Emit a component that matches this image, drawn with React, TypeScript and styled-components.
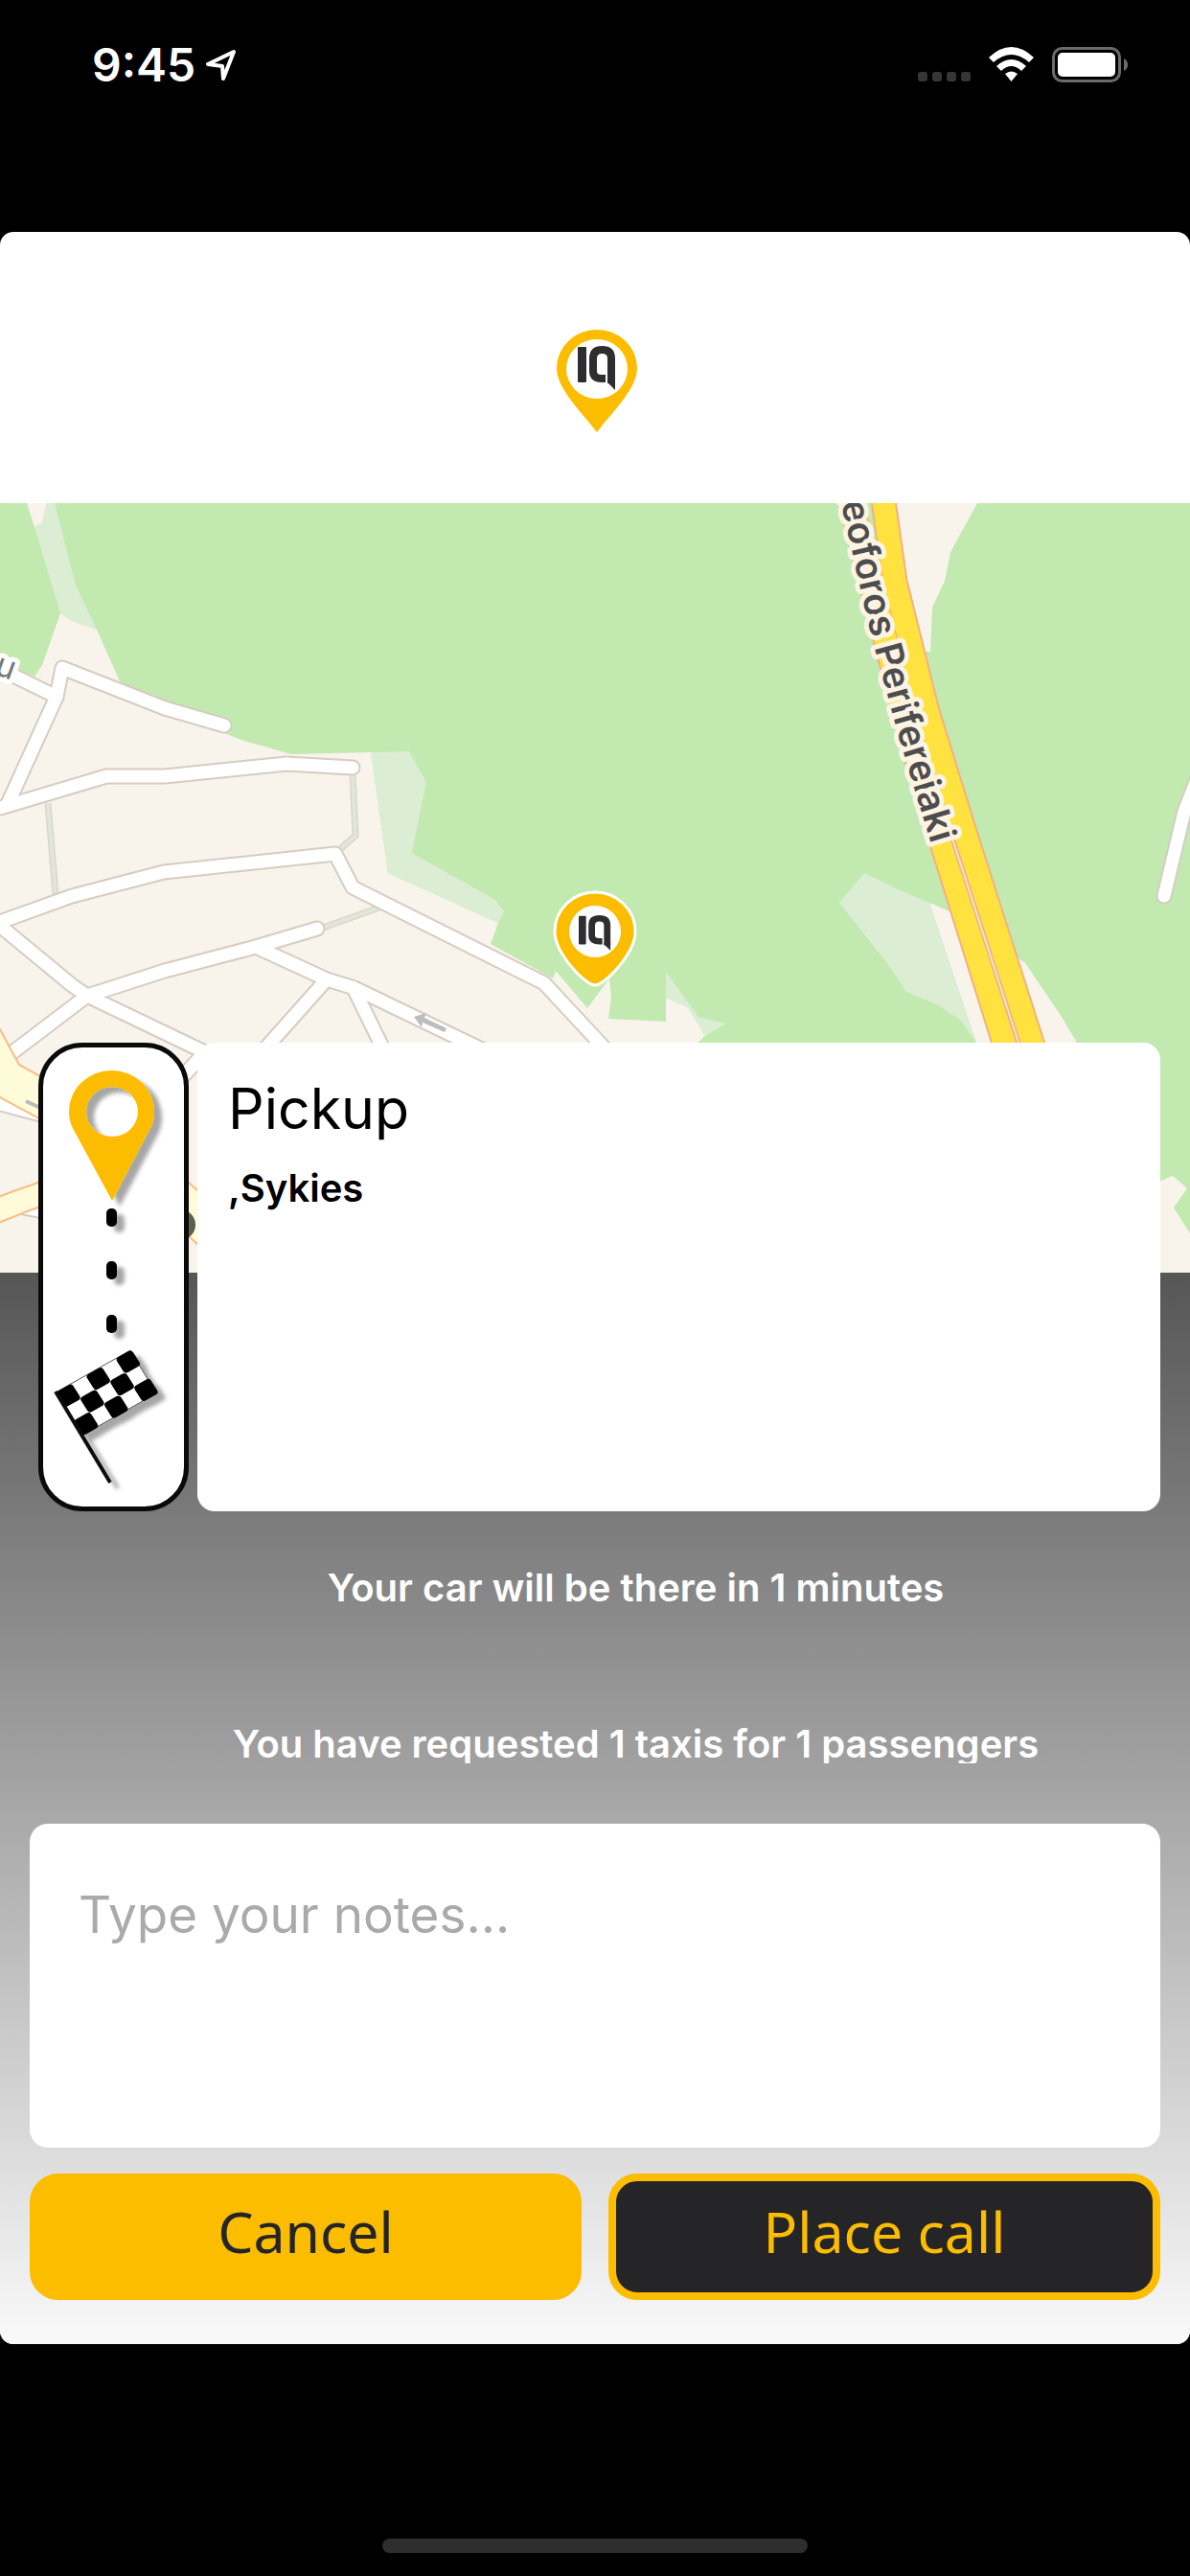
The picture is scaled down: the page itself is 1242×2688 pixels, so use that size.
import React, { useState } from "react";
import styled, { createGlobalStyle } from "styled-components";

const YELLOW = "#fcbd00";
const INK = "#252527";

const GlobalStyle = createGlobalStyle`
  * { box-sizing: border-box; }
  body {
    margin: 0;
    background: #000;
    font-family: Inter, "Liberation Sans", sans-serif;
  }
`;

const Screen = styled.div`
  min-height: 100vh;
  display: flex;
  flex-direction: column;
  background: #000;
`;

const StatusBar = styled.header`
  height: 242px;
  padding: 40px 64px 0 96px;
  display: flex;
  justify-content: space-between;
  align-items: flex-start;
  color: #fff;
`;

const StatusGroup = styled.div<{ $gap: number }>`
  height: 56px;
  display: flex;
  align-items: center;
  gap: ${(p) => p.$gap}px;
`;

const Clock = styled.time`
  font-size: 48px;
  line-height: 56px;
  font-weight: 600;
`;

const Sheet = styled.main`
  border-radius: 14px;
  overflow: hidden;
  background: #fff;
`;

const Brand = styled.div`
  height: 283px;
  padding: 102px 0 0 4px;
  display: flex;
  justify-content: center;
  align-items: flex-start;
`;

const MapArea = styled.section`
  height: 803px;
  background: #c2e9b0;

  svg {
    display: block;
    width: 100%;
    height: 100%;
  }
`;

const RoadName = styled.text`
  font-family: Inter, "Liberation Sans", sans-serif;
  font-size: 39px;
  font-weight: 600;
  fill: #4d4d4d;
  stroke: #fdf3e3;
  stroke-width: 10px;
  stroke-linejoin: round;
  paint-order: stroke;
`;

const StreetName = styled(RoadName)`
  font-size: 34px;
  font-weight: 400;
  fill: #777;
  stroke: #fff;
`;

const Panel = styled.section`
  display: flex;
  flex-direction: column;
  padding: 0 31px 46px;
  background: linear-gradient(#565656, #f9f9f9);
`;

const Trip = styled.div`
  margin-top: -240px;
  height: 489px;
  padding-left: 9px;
  display: flex;
  gap: 9px;
  z-index: 1;
`;

const Journey = styled.div`
  width: 157px;
  flex: none;
  border: 5px solid #0a0a0a;
  border-radius: 46px;
  background: #fff;

  svg {
    display: block;
    width: 100%;
    height: 100%;
  }
`;

const TripCard = styled.article`
  flex: 1;
  padding: 32px;
  border-radius: 18px;
  background: #fff;
  color: #000;
`;

const TripTitle = styled.h1`
  margin: 0;
  font-size: 59px;
  line-height: 74px;
  font-weight: 400;
`;

const TripPlace = styled.p`
  margin: 18px 0 0;
  font-size: 40px;
  line-height: 56px;
  font-weight: 600;
`;

const Notices = styled.div`
  padding: 56px 0 63px 54px;
  display: flex;
  flex-direction: column;
  gap: 119px;
`;

const Notice = styled.p`
  margin: 0 -31px 0 0;
  height: 44px;
  overflow: hidden;
  color: #fff;
  font-size: 40px;
  line-height: 48px;
  font-weight: 600;
  text-align: center;
`;

const Notes = styled.textarea`
  display: block;
  width: 100%;
  height: 338px;
  padding: 61px 51px;
  border: 0;
  border-radius: 19px;
  resize: none;
  background: #fff;
  color: #000;
  font-family: inherit;
  font-size: 53px;
  line-height: 68px;

  &::placeholder {
    color: #aaa;
    opacity: 1;
  }
`;

const Actions = styled.div`
  margin-top: 27px;
  display: flex;
  gap: 28px;
`;

const ActionButton = styled.button<{ $dark?: boolean }>`
  flex: 1;
  height: 132px;
  padding: 0 0 12px;
  border: 8px solid ${YELLOW};
  border-radius: 30px;
  background: ${(p) => (p.$dark ? INK : YELLOW)};
  color: ${(p) => (p.$dark ? YELLOW : INK)};
  font-family: "Noto Sans", "Open Sans", sans-serif;
  font-size: 59px;
  line-height: 72px;
`;

const HomeBar = styled.div`
  width: 444px;
  height: 15px;
  margin: auto auto 24px;
  border-radius: 8px;
  background: #2e2e2e;
`;

/* The IQ mark, drawn on a 39 x 46 grid. */
function Mark() {
  return (
    <g fill="none" stroke="#2e2e30" strokeWidth="8">
      <rect x="0" y="1" width="9" height="37" rx="1" fill="#2e2e30" stroke="none" />
      <path d="M29 34 H25 Q16 34 16 26 V13 Q16 4 25.500 4 Q35 4 35 13 V39" />
      <path d="M31 36 V38 L39 46 V36 Z" fill="#2e2e30" stroke="none" />
    </g>
  );
}

function BrandPin() {
  return (
    <svg width="84" height="107" viewBox="0 0 84 107" role="img" aria-label="IQ">
      <path
        d="M42 107 C27 87 0 62 0 40 A42 40 0 0 1 84 40 C84 62 57 87 42 107 Z"
        fill={YELLOW}
      />
      <ellipse cx="42" cy="41" rx="32" ry="31" fill="#fff" />
      <g transform="translate(22 17)">
        <Mark />
      </g>
    </svg>
  );
}

const STREETS = [
  "M234 232 L172 214 L65 172 L59 202 L8 314",
  "M-10 168 L16 181 L59 202",
  "M-10 321 L0 318 L111 285 L172 285 L299 272 L368 276",
  "M-20 444 L0 437 L75 410 L171 385 L350 366 L368 401 L568 501 L660 600",
  "M-10 432 L0 441 L75 503 L91 514 L214 573 L180 610",
  "M331 444 L267 463 L172 488 L91 514 L8 577",
  "M267 463 L341 497 L370 506 L540 588",
  "M341 497 L260 588",
  "M370 508 L410 590",
  "M1252 281 L1236 322 L1215 410",
];

const FOOTPATHS = [
  "M50 313 L58 408",
  "M368 283 L371 347 L356 360",
  "M337 443 L396 422",
];

const HIGHWAY = [
  "M886 -10 L912 95 L925 146 L952 250 L983 355 L1048 563 L1060 601",
  "M921 -10 L934 82 L968 218 L1008 347 L1077 563 L1089 601",
];

const MEDIAN = "M994 350 L1063 563 L1075 601";

function CityMap() {
  return (
    <svg
      viewBox="0 0 1242 803"
      preserveAspectRatio="xMidYMid slice"
      role="img"
      aria-label="Map of the pickup area"
    >
      <rect width="1242" height="803" fill="#c2e9b0" />
      <g fill="#f8f4ec">
        <path d="M0 165 L36 181 L44 169 L63 115 L75 123 L101 132 L125 186 L234 240 L255 248 L304 262 L387 260 L405 386 L520 438 L512 460 L577 496 L580 488 L613 527 L636 496 L638 515 L635 538 L695 541 L695 516 L718 526 L736 556 L700 590 V803 H0 Z" />
        <path d="M28 0 H50 L44 21 L36 25 Z" />
        <path d="M935 0 H1020 L992 51 L986 81 L973 109 L971 155 H965 L940 80 Z" />
        <path d="M970 417 L1000 430 L1050 590 H1026 L1019 563 Z" />
        <path d="M1060 473 L1070 480 L1106 533 L1124 563 L1138 590 H1080 Z" />
        <path d="M1205 710 L1224 702 L1239 715 L1225 735 L1242 762 V803 H1205 Z" />
      </g>
      <g fill="#dbedd3">
        <path d="M36 25 L44 21 L48 0 H57 L79 85 L101 132 L75 123 L63 115 Z" />
        <path d="M387 260 L427 259 L445 291 L430 365 L517 414 L526 426 L520 438 L405 386 Z" />
        <path d="M695 489 L729 536 L758 543 L736 556 L718 526 L695 516 Z" />
        <path d="M902 386 L876 417 L898 445 L926 480 L946 510 L979 524 L1002 539 L1019 563 L970 417 L942 405 Z" />
      </g>

      <g fill="none" stroke="#d9d8c6" strokeWidth="7">
        {FOOTPATHS.map((d) => (
          <path key={d} d={d} />
        ))}
      </g>
      <g fill="none" stroke="#e4e5da" strokeWidth="4">
        {FOOTPATHS.map((d) => (
          <path key={d} d={d} />
        ))}
      </g>
      <g fill="none" stroke="#d6ccc2" strokeWidth="17" strokeLinecap="round" strokeLinejoin="round">
        {STREETS.map((d) => (
          <path key={d} d={d} />
        ))}
        <path d="M-10 624 L50 640" />
        <path d="M20 734 L60 742" />
      </g>
      <g fill="none" stroke="#fff" strokeWidth="13" strokeLinecap="round" strokeLinejoin="round">
        {STREETS.map((d) => (
          <path key={d} d={d} />
        ))}
        <path d="M-10 624 L50 640" />
        <path d="M20 734 L60 742" />
      </g>

      <g fill="#fdfbd8" stroke="#f9bd84" strokeWidth="2">
        <path d="M-4 542 L20 586 L60 608 V660 L39 641 L-4 618 Z" />
        <path d="M-4 725 L14 718 L60 702 V728 L31 738 L-4 752 Z" />
        <path d="M180 694 L225 734 V790 L180 750 Z" />
      </g>
      <circle cx="188" cy="753" r="16" fill="#5d5f50" />
      <path d="M27 624 L42 631" stroke="#bbb" strokeWidth="4" />
      <path d="M432 536 L445 532 L443 537 L466 548 L464 552 L441 542 L440 547 Z" fill="#bdbdbd" />

      <g fill="none" stroke="#f3b184" strokeWidth="27" strokeLinejoin="round">
        {HIGHWAY.map((d) => (
          <path key={d} d={d} />
        ))}
      </g>
      <g fill="none" stroke="#ffe140" strokeWidth="23" strokeLinejoin="round">
        {HIGHWAY.map((d) => (
          <path key={d} d={d} />
        ))}
      </g>
      <path d={MEDIAN} fill="none" stroke="#f3b184" strokeWidth="5" />
      <path d={MEDIAN} fill="none" stroke="#ece3c8" strokeWidth="2" />
      <path id="ringRoad" d="M829 -210 L881 14 L909 137 L938 244 L972 356" fill="none" />
      <RoadName textAnchor="end">
        <textPath href="#ringRoad" startOffset="100%">
          Leoforos Perifereiaki
        </textPath>
      </RoadName>
      <StreetName transform="translate(-7 178) rotate(20)">u</StreetName>

      <g transform="translate(577 404)">
        <path
          d="M44 99 C34 99 2 66 2 43 A42 41 0 0 1 86 43 C86 66 54 99 44 99 Z"
          fill={YELLOW}
          stroke="#fff"
          strokeWidth="3"
        />
        <circle cx="44" cy="43" r="27" fill="#fff" />
        <g transform="translate(27 26) scale(0.850 0.800)">
          <Mark />
        </g>
      </g>
    </svg>
  );
}

const CHECKS = [
  [0, 0], [2, 0], [4, 0],
  [1, 1], [3, 1],
  [0, 2], [2, 2], [4, 2],
];

function JourneyIcon() {
  return (
    <svg viewBox="5 5 147 479" aria-hidden="true">
      <defs>
        <filter id="cast" x="-30%" y="-30%" width="180%" height="180%">
          <feDropShadow dx="8" dy="6" stdDeviation="2" floodColor="#000" floodOpacity="0.350" />
        </filter>
      </defs>
      <g filter="url(#cast)">
        <path
          fillRule="evenodd"
          fill={YELLOW}
          d="M77 165 L38 93 C34 86 32 80 32 72 A44.500 43 0 0 1 121 72 C121 80 119 86 115 93 Z M50 72 a27 26 0 1 0 54 0 a27 26 0 1 0 -54 0 Z"
        />
        <g fill="#000">
          <rect x="71" y="173" width="11" height="19" rx="5" />
          <rect x="71" y="228" width="11" height="19" rx="5" />
          <rect x="71" y="284" width="11" height="19" rx="5" />
        </g>
        <path d="M18 365 L96 321 L123 366 L47 409 Z" fill="#fff" stroke="#555" strokeWidth="1" />
        <g transform="matrix(15.600 -8.800 9.300 14.700 18 365)" fill="#000">
          {CHECKS.map(([x, y]) => (
            <rect key={`${x}-${y}`} x={x} y={y} width="1.080" height="1.080" rx="0.200" />
          ))}
        </g>
        <path d="M18 364 L75 459" stroke="#111" strokeWidth="4" />
      </g>
    </svg>
  );
}

function LocationArrow() {
  return (
    <svg width="32" height="34" viewBox="0 0 32 34" aria-hidden="true">
      <path
        d="M29 3 L2 16 L17 18 L18 31 Z"
        fill="none"
        stroke="#fff"
        strokeWidth="4"
        strokeLinejoin="round"
      />
    </svg>
  );
}

function StatusIcons() {
  return (
    <svg width="220" height="38" viewBox="0 0 220 38" aria-hidden="true">
      {[0, 15, 30, 45].map((x) => (
        <rect key={x} x={x} y="26" width="10" height="10" rx="3" fill="#363636" />
      ))}
      <g fill="#fff">
        <path d="M74 11 Q97.500 -11 121 11 L116 16 Q97.500 0 79 16 Z" />
        <path d="M82 20 Q97.500 6 113 20 L108 25 Q97.500 15 87 25 Z" />
        <path d="M91 28 Q97.500 23 104 28 L97.500 36 Z" />
        <rect x="146" y="6" width="60" height="25" rx="5" />
      </g>
      <rect x="141.500" y="1.500" width="69" height="34" rx="9" fill="none" stroke="#6b6b6b" strokeWidth="3" />
      <path d="M215 12 Q219 14 219 18.500 Q219 23 215 25 Z" fill="#6b6b6b" />
    </svg>
  );
}

export default function App() {
  const [notes, setNotes] = useState("");

  return (
    <Screen>
      <GlobalStyle />
      <StatusBar>
        <StatusGroup $gap={11}>
          <Clock>9:45</Clock>
          <LocationArrow />
        </StatusGroup>
        <StatusGroup $gap={0}>
          <StatusIcons />
        </StatusGroup>
      </StatusBar>

      <Sheet>
        <Brand>
          <BrandPin />
        </Brand>
        <MapArea>
          <CityMap />
        </MapArea>
        <Panel>
          <Trip>
            <Journey>
              <JourneyIcon />
            </Journey>
            <TripCard>
              <TripTitle>Pickup</TripTitle>
              <TripPlace>,Sykies</TripPlace>
            </TripCard>
          </Trip>
          <Notices>
            <Notice>Your car will be there in 1 minutes</Notice>
            <Notice>You have requested 1 taxis for 1 passengers</Notice>
          </Notices>
          <Notes
            aria-label="Notes"
            placeholder="Type your notes..."
            value={notes}
            onChange={(e) => setNotes(e.target.value)}
          />
          <Actions>
            <ActionButton type="button">Cancel</ActionButton>
            <ActionButton type="button" $dark>
              Place call
            </ActionButton>
          </Actions>
        </Panel>
      </Sheet>
      <HomeBar />
    </Screen>
  );
}
